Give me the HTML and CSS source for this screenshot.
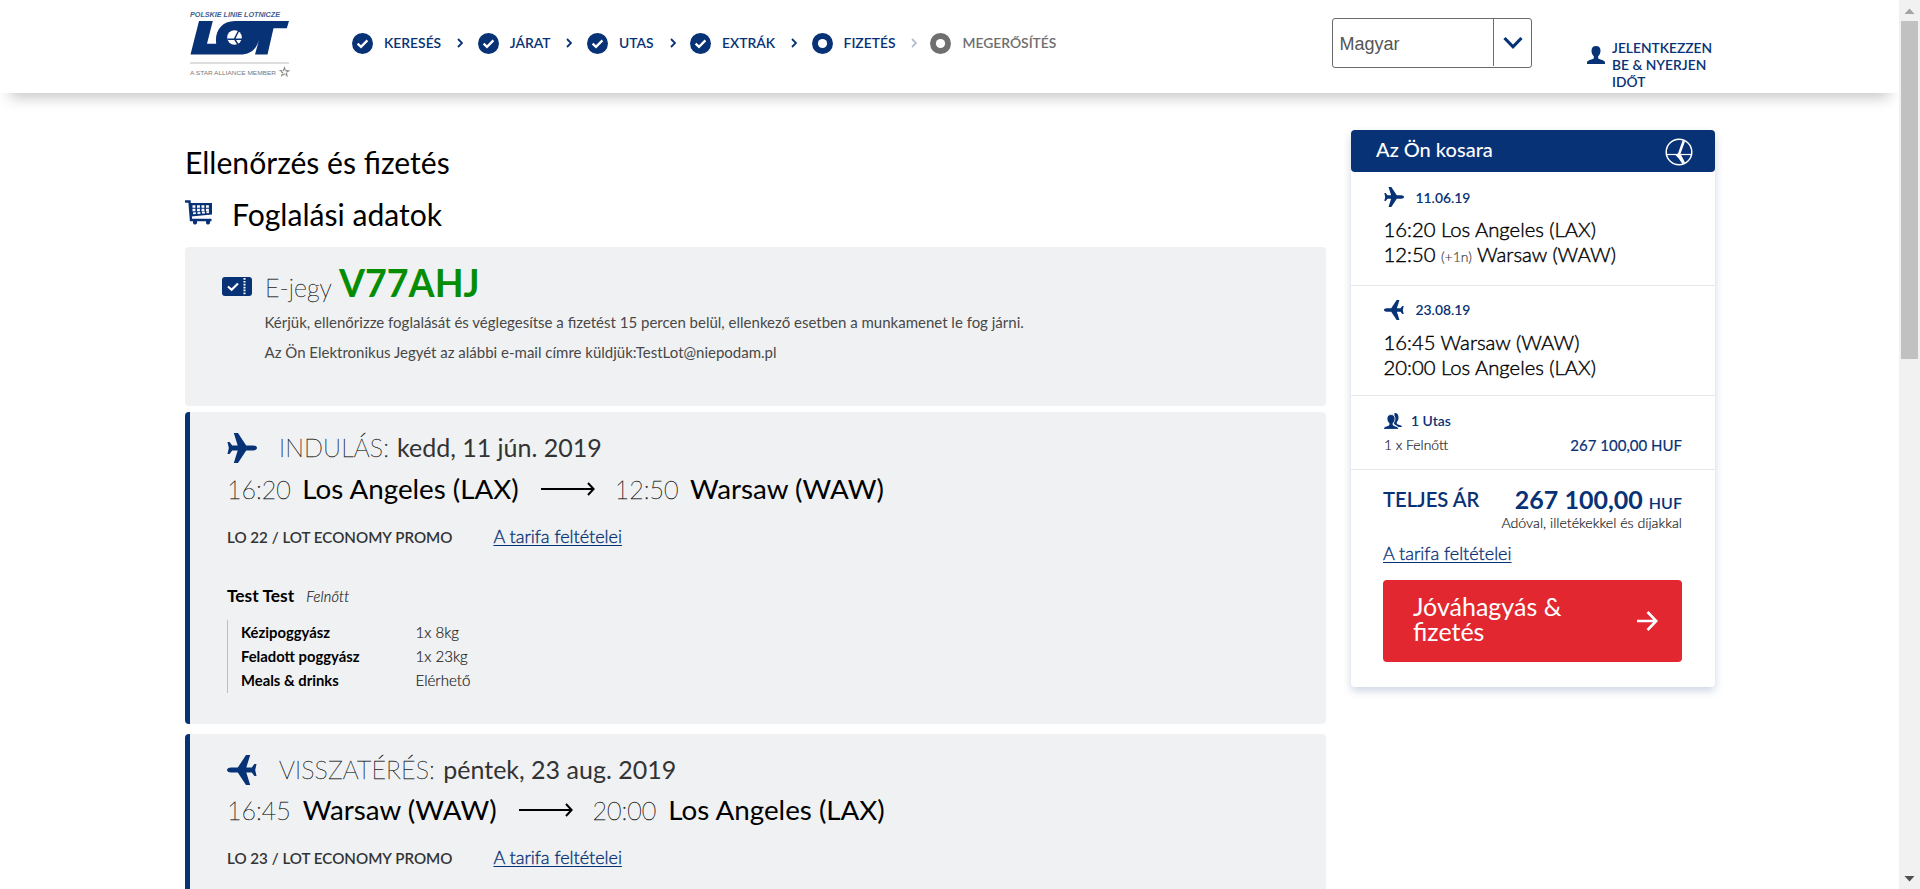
FILE: index.html
```html
<!DOCTYPE html>
<html lang="hu">
<head>
<meta charset="utf-8">
<title>Ellenőrzés és fizetés</title>
<link rel="stylesheet" href="styles.css">
</head>
<body>
<svg class="defs" aria-hidden="true">
  <symbol id="plane" viewBox="0 0 30 30"><path d="M30 15c0 1.400-1.800 2.500-4 2.500h-6.800L11 30H6.800l3.900-12.500H5.200L2.600 21H0.500l1.300-6L0.500 9h2.100l2.600 3.500h5.500L6.800 0H11l8.200 12.500H26c2.200 0 4 1.100 4 2.500z"/></symbol>
  <symbol id="check" viewBox="0 0 21 21"><circle cx="10.500" cy="10.500" r="10.500"/><path d="M5.600 10.600l3.400 3.300 6.400-6.500" fill="none" stroke="#fff" stroke-width="2.300"/></symbol>
  <symbol id="dot" viewBox="0 0 21 21"><circle cx="10.500" cy="10.500" r="10.500"/><circle cx="10.500" cy="10.500" r="4.600" fill="#fff"/></symbol>
  <symbol id="chev" viewBox="0 0 6 10"><path d="M1 1l4 4-4 4" fill="none" stroke="currentColor" stroke-width="1.800"/></symbol>
  <symbol id="long" viewBox="0 0 54 14"><path d="M0 7h53M47 1l5.600 6L47 13" fill="none" stroke="#000" stroke-width="2"/></symbol>
</svg>

<div class="page">
  <header class="header">
    <svg class="logo" viewBox="0 0 102 72">
      <text x="0" y="11.600" class="logo-top" textLength="90" lengthAdjust="spacingAndGlyphs">POLSKIE LINIE LOTNICZE</text>
      <path fill="#083276" d="M9 16h13.800L17 38.700h9.200C24.500 27 31 16 45 16h54l-2.200 7.200H83.500L77.500 49.500H65l4-14.500C66 45 60 49.500 50 49.500H.5z"/>
      <circle cx="44.500" cy="32.500" r="7.300" fill="#fff"/>
      <path d="M37.500 34.200h14.500M48.500 26l-4 8 3.500 5.500" fill="none" stroke="#083276" stroke-width="1.500"/>
      <path d="M0 58h99" stroke="#bbb" stroke-width="1"/>
      <text x="0" y="69.500" class="logo-sub" textLength="86" lengthAdjust="spacingAndGlyphs">A STAR ALLIANCE MEMBER</text>
      <path d="M94.500 62.800l1.100 2.800 3 .200-2.300 1.900.8 2.900-2.600-1.600-2.600 1.600.8-2.900-2.300-1.900 3-.200z" fill="none" stroke="#888" stroke-width="1.300" stroke-dasharray="2 1"/>
    </svg>

    <nav class="steps">
      <svg class="step-icon"><use href="#check"/></svg><span>KERESÉS</span><svg class="chev"><use href="#chev"/></svg>
      <svg class="step-icon"><use href="#check"/></svg><span>JÁRAT</span><svg class="chev"><use href="#chev"/></svg>
      <svg class="step-icon"><use href="#check"/></svg><span>UTAS</span><svg class="chev"><use href="#chev"/></svg>
      <svg class="step-icon"><use href="#check"/></svg><span>EXTRÁK</span><svg class="chev"><use href="#chev"/></svg>
      <svg class="step-icon"><use href="#dot"/></svg><span>FIZETÉS</span><svg class="chev pale"><use href="#chev"/></svg>
      <svg class="step-icon off"><use href="#dot"/></svg><span class="off">MEGERŐSÍTÉS</span>
    </nav>

    <div class="language">
      <span class="language-name">Magyar</span>
      <span class="language-btn"><svg width="20" height="14" viewBox="0 0 20 14"><path d="M1.500 2L10 10.800 18.500 2" fill="none" stroke="#083276" stroke-width="3.200"/></svg></span>
    </div>

    <a class="login">
      <svg width="18" height="18" viewBox="0 0 18 18"><path d="M9 0c3 0 4.500 2 4.500 4.800 0 2.400-1 4.400-2.300 5.500v2c.300 1.200 6.800 1.700 6.800 4.200V18H0v-1.500c0-2.500 6.500-3 6.800-4.200v-2C5.500 9.200 4.500 7.200 4.500 4.800 4.500 2 6 0 9 0z"/></svg>
      <span>JELENTKEZZEN<br>BE &amp; NYERJEN<br>IDŐT</span>
    </a>
  </header>

  <div class="content">
    <main class="main">
      <h1>Ellenőrzés és fizetés</h1>
      <h2>
        <svg class="cart" viewBox="0 0 27 25"><path d="M0 1.500h4.500L6 20h20.500" fill="none" stroke="#083276" stroke-width="2.400"/><path fill="#083276" d="M4.500 3H27v11.500L6 16.500zM8 20h4v2a2 2 0 1 1-4 1zM21 20h4v2a2 2 0 1 1-4 1z"/><path stroke="#fff" stroke-width="2.300" stroke-dasharray="2.900 1.600" d="M7.500 6.500h17M7.500 10h17"/><path stroke="#fff" stroke-width="1.800" d="M8 13.400l16-1.200" stroke-dasharray="2.900 1.600"/></svg>
        Foglalási adatok
      </h2>

      <section class="card ticket">
        <svg class="ticket-icon" viewBox="0 0 30 19"><rect width="30" height="19" rx="3" fill="#083276"/><path d="M6 9.500l3.600 3.300L16 6.500" fill="none" stroke="#fff" stroke-width="2.200"/><path d="M22.500 1v17" stroke="#fff" stroke-width="2" stroke-dasharray="1.700 1.200"/></svg>
        <div>
          <div class="ticket-head"><span class="thin">E-jegy</span> <strong>V77AHJ</strong></div>
          <p>Kérjük, ellenőrizze foglalását és véglegesítse a fizetést 15 percen belül, ellenkező esetben a munkamenet le fog járni.</p>
          <p>Az Ön Elektronikus Jegyét az alábbi e-mail címre küldjük:TestLot@niepodam.pl</p>
        </div>
      </section>

      <section class="card flight">
        <div class="day"><svg class="day-icon"><use href="#plane"/></svg><span><span class="thin">INDULÁS:</span> kedd, 11 jún. 2019</span></div>
        <div class="route"><span class="thin">16:20</span><b>Los Angeles (LAX)</b><svg class="long"><use href="#long"/></svg><span class="thin">12:50</span><b>Warsaw (WAW)</b></div>
        <div class="fare"><span>LO 22 / LOT ECONOMY PROMO</span><a class="link">A tarifa feltételei</a></div>
        <div class="person"><strong>Test Test</strong><em>Felnőtt</em></div>
        <dl class="extras">
          <dt>Kézipoggyász</dt><dd>1x 8kg</dd>
          <dt>Feladott poggyász</dt><dd>1x 23kg</dd>
          <dt>Meals &amp; drinks</dt><dd>Elérhető</dd>
        </dl>
      </section>

      <section class="card flight inbound">
        <div class="day"><svg class="day-icon back"><use href="#plane"/></svg><span><span class="thin">VISSZATÉRÉS:</span> péntek, 23 aug. 2019</span></div>
        <div class="route"><span class="thin">16:45</span><b>Warsaw (WAW)</b><svg class="long"><use href="#long"/></svg><span class="thin">20:00</span><b>Los Angeles (LAX)</b></div>
        <div class="fare"><span>LO 23 / LOT ECONOMY PROMO</span><a class="link">A tarifa feltételei</a></div>
      </section>
    </main>

    <aside class="basket">
      <div class="basket-head">
        <span>Az Ön kosara</span>
        <svg width="28" height="28" viewBox="0 0 28 28" fill="none" stroke="#fff"><circle cx="14" cy="14" r="12.800" stroke-width="1.500"/><path stroke-width="1.200" d="M2 16.500h24"/><path fill="#fff" stroke="none" d="M17.500 2.500l2.500 1-4.500 12.300 4.500 8.700-2.300 1.700-4.200-6-3.500-3.700 3-1z"/></svg>
      </div>
      <div class="leg">
        <div class="leg-date"><svg class="leg-icon"><use href="#plane"/></svg>11.06.19</div>
        <div class="leg-row">16:20 Los Angeles (LAX)</div>
        <div class="leg-row">12:50 <small>(+1n)</small> Warsaw (WAW)</div>
      </div>
      <div class="leg return">
        <div class="leg-date"><svg class="leg-icon back"><use href="#plane"/></svg>23.08.19</div>
        <div class="leg-row">16:45 Warsaw (WAW)</div>
        <div class="leg-row">20:00 Los Angeles (LAX)</div>
      </div>
      <div class="pax">
        <div class="pax-head"><svg width="18" height="16" viewBox="0 0 18 16" fill="#083276"><path d="M10.500 0c3 0 4 2 4 4.500 0 2-.700 3.700-1.700 4.700v1.500c.500 1 5.200 1.200 5.200 3.300h-3.500L10 11z"/><path stroke="#fff" stroke-width=".8" d="M7 1.500c2.800 0 4 1.800 4 4.200 0 2-.800 3.500-1.900 4.400V12c.300.900 5.400 1.200 5.400 3.400v1H-.4v-1C-.4 13.200 4.700 12.900 5 12v-1.900C3.900 9.200 3 7.700 3 5.700c0-2.400 1.200-4.200 4-4.200z"/></svg>1 Utas</div>
        <div class="pax-row"><span>1 x Felnőtt</span><span class="pax-price">267 100,00 HUF</span></div>
      </div>
      <div class="total">
        <div class="total-row"><span class="total-label">TELJES ÁR</span><span class="total-sum">267 100,00 <small>HUF</small></span></div>
        <div class="total-note">Adóval, illetékekkel és díjakkal</div>
        <a class="link">A tarifa feltételei</a>
        <button class="pay"><span>Jóváhagyás &amp;<br>fizetés</span><svg width="21" height="20" viewBox="0 0 21 20"><path d="M0 10h19M10.500 1l8.800 9-8.800 9" fill="none" stroke="#fff" stroke-width="2.600"/></svg></button>
      </div>
    </aside>
  </div>
</div>

<div class="scrollbar">
  <svg width="21" height="21" viewBox="0 0 21 21"><path d="M10.500 10.500l5 5.500h-10z" fill="#a3a3a3" transform="translate(0 -2)"/></svg>
  <div class="thumb"></div>
  <svg class="down" width="21" height="21" viewBox="0 0 21 21"><path d="M5.500 8h10l-5 5.500z" fill="#505050"/></svg>
</div>
</body>
</html>
```
FILE: styles.css
```css
* { box-sizing: border-box; }
body {
  margin: 0;
  height: 889px;
  display: flex;
  overflow: hidden;
  background: #fff;
  color: #000;
  font-family: "Lato", sans-serif;
}
h1, h2, p, dl, dd, b { margin: 0; font-weight: 400; }
svg { flex: none; display: block; }
.defs { position: absolute; width: 0; height: 0; }
.page { width: 1899px; height: 889px; overflow: hidden; }

/* Header */
.header {
  height: 93px;
  display: flex;
  padding-left: 190px;
  background: #fff;
  box-shadow: 0 14px 14px -10px rgba(0, 0, 0, .24);
  color: #083276;
}
.logo { width: 102px; height: 72px; margin: 5px 60px 0 0; }
.logo-top { font: italic 700 6.500px "Liberation Sans", sans-serif; fill: #3f5f95; }
.logo-sub { font: 6px "Liberation Sans", sans-serif; fill: #777; }
.steps {
  width: 980px;
  height: 86px;
  display: flex;
  align-items: center;
  font-size: 13.850px;
  font-weight: 600;
}
.steps span { margin-bottom: 2px; }
.step-icon { width: 21px; height: 21px; margin-right: 11px; fill: #083276; }
.chev { width: 6px; height: 10px; margin: 0 14.500px 0 16px; }
.pale { color: #b4bfd2; margin-right: 13px; }
.off { color: #6f6f6f; fill: #6f6f6f; }
.language {
  width: 200px;
  height: 50px;
  margin-top: 18px;
  display: flex;
  border: 1px solid #6b6b6b;
  border-radius: 3px;
}
.language-name {
  width: 160px;
  padding-left: 6.500px;
  font: 18px/50px "Liberation Sans", sans-serif;
  color: #555;
}
.language-btn {
  flex: 1;
  height: 47px;
  display: flex;
  align-items: center;
  justify-content: center;
  border-left: 1px solid #6b6b6b;
}
.login {
  display: flex;
  gap: 7px;
  margin: 39px 0 0 55px;
  font-size: 13.800px;
  font-weight: 600;
  line-height: 17px;
}
.login svg { margin-top: 7px; fill: #083276; }

/* Columns */
.content { display: flex; gap: 25px; padding-left: 185px; }
.main { width: 1141px; padding-top: 43px; }
h1, h2 { height: 52px; font-size: 30.100px; line-height: 53px; }
h2 { display: flex; gap: 20px; margin-bottom: 7px; }
.cart { width: 27px; height: 25px; margin-top: 12px; }
.thin { font-weight: 100; font-size: 25px; -webkit-text-stroke: .35px #222; color: #222; }
.link { color: #083276; font-size: 18px; font-weight: 300; text-decoration: underline; text-decoration-thickness: 1px; text-underline-offset: 2px; -webkit-text-stroke: .35px; }

/* Cards */
.card { background: #eff1f3; border-radius: 4px; }
.ticket { height: 159px; display: flex; gap: 12.500px; padding: 10px 37px; margin-bottom: 6px; }
.ticket-icon { width: 30px; height: 19px; margin-top: 20px; }
.ticket-head { height: 50px; line-height: 52px; font-size: 25px; }
.ticket-head .thin { margin-left: .5px; }
.ticket-head strong { font-size: 37.500px; color: #058d05; margin-left: 1px; }
.ticket p { font-size: 15px; line-height: 30px; color: #484848; }
.flight {
  height: 312px;
  padding: 13px 37px 0;
  margin-bottom: 10px;
  border-left: 5px solid #083276;
}
.day { height: 44px; display: flex; align-items: center; gap: 22px; font-size: 25px; color: #333; }
.day .thin { margin-right: 1.500px; letter-spacing: .1px; }
.inbound .thin { margin-right: 2px; }
.day-icon { width: 30px; height: 30px; margin-top: 2px; fill: #083276; }
.back { transform: scaleX(-1); }
.route { height: 40px; display: flex; align-items: baseline; line-height: 40px; }
.route b { font-size: 27.750px; margin-left: 11.500px; }
.inbound .route { margin-top: -1px; }
.inbound .route b { margin-left: 10px; }
.long { width: 54px; height: 14px; margin: 0 20px 0 22px; align-self: center; }
.fare { height: 30px; margin-top: 12px; display: flex; gap: 41px; align-items: baseline; line-height: 30px; font-size: 15.150px; font-weight: 600; color: #333; }
.person { margin-top: 30px; display: flex; gap: 12px; align-items: baseline; line-height: 30px; font-size: 17.400px; }
.person em { font-size: 14.600px; font-weight: 300; color: #222; letter-spacing: .2px; -webkit-text-stroke: .2px; }
.extras {
  width: 500px;
  margin-top: 8px;
  padding: 1px 0 0 13px;
  display: grid;
  grid-template-columns: 174.500px 1fr;
  border-left: 1px solid #b7bfcc;
  font-size: 14.800px;
  line-height: 24px;
}
.extras dt { font-weight: 700; margin-top: -1px; padding-bottom: 1px; }
.extras dd { color: #222; font-weight: 300; font-size: 15.100px; margin-top: -1px; padding-bottom: 1px; -webkit-text-stroke: .2px; }

/* Basket */
.basket {
  width: 364px;
  height: 557px;
  margin-top: 37px;
  border-radius: 4px;
  background: #fff;
  box-shadow: 0 4px 8px rgba(8, 50, 118, .2);
}
.basket-head {
  height: 42px;
  padding: 0 22px 0 25px;
  display: flex;
  justify-content: space-between;
  background: #083276;
  border-radius: 4px;
  color: #fff;
  font-size: 20px;
  font-weight: 500;
  line-height: 38px;
}
.basket-head svg { margin-top: 8px; }
.leg { height: 114px; padding: 15px 33px 0 32.500px; border-bottom: 1px solid #e4e6e9; }
.return { height: 110px; padding-top: 14px; }
.leg-date { height: 20px; margin-bottom: 10px; display: flex; gap: 12px; line-height: 21px; font-size: 13.900px; font-weight: 600; color: #083276; }
.return .leg-date { line-height: 19px; }
.leg-icon { width: 20px; height: 20px; fill: #083276; }
.leg-row { font-size: 20.300px; line-height: 25px; font-weight: 300; -webkit-text-stroke: .4px; }
.leg-row small { font-size: 14px; color: #444; -webkit-text-stroke: .2px; }
.pax { height: 74px; padding: 13px 33px 0; border-bottom: 1px solid #e4e6e9; line-height: 24px; color: #083276; }
.pax-head { display: flex; gap: 9px; align-items: center; font-size: 13.900px; font-weight: 600; }
.pax-row { display: flex; justify-content: space-between; font-size: 13.900px; font-weight: 300; color: #222; -webkit-text-stroke: .2px; }
.pax-price { font-size: 15px; font-weight: 400; color: #083276; }
.total { padding: 14px 33px 0 32px; }
.total-row { height: 30px; display: flex; justify-content: space-between; line-height: 30px; color: #083276; }
.total-label { font-size: 20.200px; font-weight: 600; }
.total-sum { font-size: 25px; font-weight: 700; }
.total-sum small { font-size: 16px; font-weight: 600; }
.total-note { margin-bottom: 8px; text-align: right; font-size: 14.200px; font-weight: 300; line-height: 18px; color: #222; -webkit-text-stroke: .2px; }
.total .link { display: block; line-height: 26px; margin-bottom: 14px; }
.pay {
  width: 299px;
  height: 82px;
  padding: 0 24px 0 30px;
  display: flex;
  align-items: center;
  justify-content: space-between;
  border: 0;
  border-radius: 4px;
  background: #e22730;
  color: #fff;
  font: 25px/25px "Lato", sans-serif;
  text-align: left;
}
.pay span { margin-bottom: 4px; }

/* Scrollbar */
.scrollbar { width: 21px; height: 889px; display: flex; flex-direction: column; background: #f1f1f1; }
.thumb { width: 17px; height: 338px; margin-left: 2px; background: #c1c1c1; }
.down { margin-top: auto; }
```
